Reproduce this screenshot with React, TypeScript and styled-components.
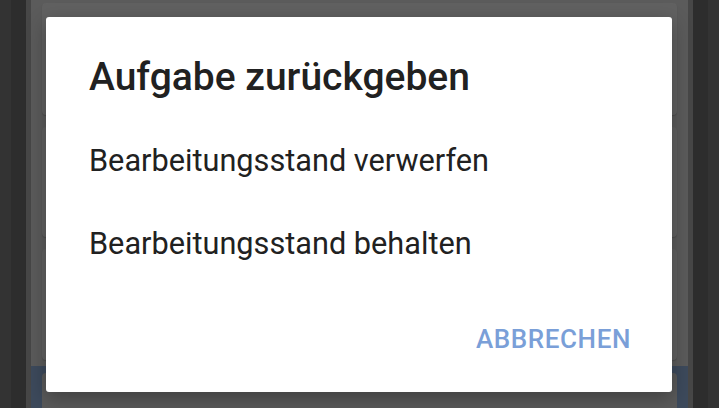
import styled, { createGlobalStyle } from "styled-components"

const Global = createGlobalStyle`
    html, body {
        margin: 0;
        padding: 0;
        background: #2e2e2e;
    }
    body {
        font-family: Roboto, "Noto Sans", "Liberation Sans", sans-serif;
    }
`

const Screen = styled.div`
    position: relative;
    width: 719px;
    height: 408px;
    overflow: hidden;
    display: flex;
    background: #2e2e2e;
`

const Edge = styled.div<{ $side: "left" | "right" }>`
    width: 31px;
    display: flex;
    flex-direction: ${(p) => (p.$side === "left" ? "row" : "row-reverse")};

    & > div:nth-child(1) { width: 11px; background: #333333; }
    & > div:nth-child(2) { width: 15px; background: #2d2d2d; }
    & > div:nth-child(3) { width: 5px; background: #474747; }
`

const Strip = styled.div``

const Column = styled.div`
    flex: 1;
    display: flex;
    flex-direction: column;
    background: #5b5b5b;
`

const CardList = styled.div`
    display: flex;
    flex-direction: column;
    gap: 12px;
    padding: 3px 11px 0;
`

const Card = styled.div<{ $h: number }>`
    height: ${(p) => p.$h}px;
    background: #616161;
    border-radius: 4px;
    box-shadow: 0 1px 1px rgba(0, 0, 0, 0.15);
`

const BlueSection = styled.div`
    margin-top: 6px;
    flex: 1;
    background: #3d4a5c;
    padding: 7px 11px 0;
`

const BlueCard = styled.div`
    height: 60px;
    background: #5a5a5a;
    border-radius: 4px;
`

const Dialog = styled.div`
    position: absolute;
    left: 46px;
    top: 17px;
    width: 626px;
    height: 375px;
    background: #ffffff;
    border-radius: 3px;
    box-shadow: 0 6px 20px rgba(0, 0, 0, 0.3);
    display: flex;
    flex-direction: column;
    box-sizing: border-box;
`

const Title = styled.h2`
    margin: 0;
    padding: 37px 43px 0;
    font-size: 39px;
    line-height: 46px;
    font-weight: 500;
    color: #212121;
`

const Options = styled.div`
    margin-top: 19px;
    display: flex;
    flex-direction: column;
`

const Option = styled.div`
    height: 83px;
    line-height: 83px;
    padding: 0 43px;
    font-size: 30.7px;
    font-weight: 400;
    color: #212121;
`

const Footer = styled.div`
    margin-top: auto;
    display: flex;
    justify-content: flex-end;
    padding: 0 41px 35px;
`

const TextButton = styled.button`
    border: none;
    background: none;
    padding: 0;
    font-family: inherit;
    font-size: 26px;
    line-height: 36px;
    font-weight: 500;
    letter-spacing: 0.6px;
    color: #7a9fd8;
`

export default function App() {
    return (
        <>
            <Global />
            <Screen>
                <Edge $side="left">
                    <Strip />
                    <Strip />
                    <Strip />
                </Edge>
                <Column>
                    <CardList>
                        <Card $h={112} />
                        <Card $h={110} />
                        <Card $h={111} />
                    </CardList>
                    <BlueSection>
                        <BlueCard />
                    </BlueSection>
                </Column>
                <Edge $side="right">
                    <Strip />
                    <Strip />
                    <Strip />
                </Edge>

                <Dialog>
                    <Title>Aufgabe zurückgeben</Title>
                    <Options>
                        <Option>Bearbeitungsstand verwerfen</Option>
                        <Option>Bearbeitungsstand behalten</Option>
                    </Options>
                    <Footer>
                        <TextButton>ABBRECHEN</TextButton>
                    </Footer>
                </Dialog>
            </Screen>
        </>
    )
}
